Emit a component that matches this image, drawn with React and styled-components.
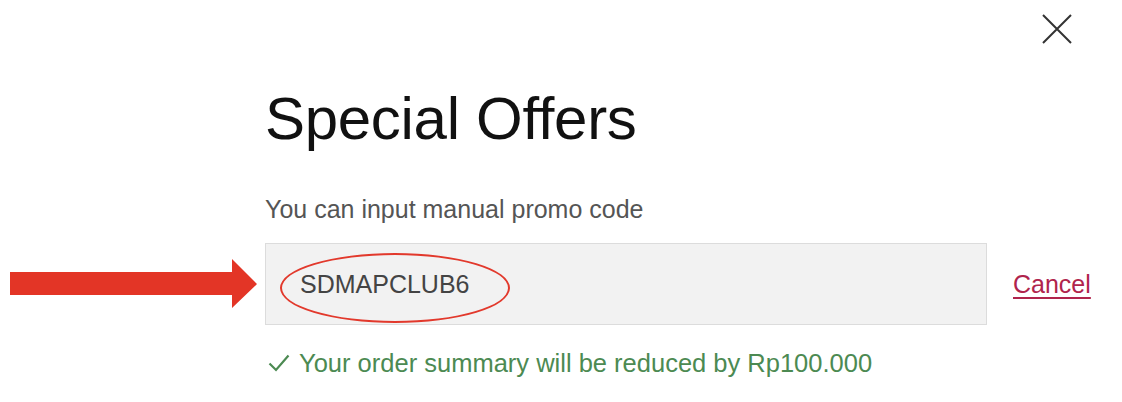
import styled, { createGlobalStyle } from "styled-components";

const GlobalStyle = createGlobalStyle`
  html, body {
    margin: 0;
    padding: 0;
    background: #fff;
  }
  body {
    font-family: "Liberation Sans", Arial, sans-serif;
    color: #222;
  }
`;

const Page = styled.div`
  width: 1122px;
  height: 402px;
  box-sizing: border-box;
  padding-top: 14px;
  display: grid;
  grid-template-columns: 265px 722px 1fr;
  grid-template-rows: 30px auto auto auto auto;
  align-content: start;
`;

const CloseBar = styled.div`
  grid-column: 1 / -1;
  display: flex;
  justify-content: flex-end;
  padding-right: 50px;
`;

const CloseButton = styled.button`
  width: 30px;
  height: 30px;
  padding: 0;
  border: none;
  background: none;
  cursor: pointer;
  display: flex;
`;

const Title = styled.h1`
  grid-column: 2;
  margin: 40px 0 0;
  font-size: 60px;
  line-height: 70px;
  font-weight: 400;
  letter-spacing: -0.3px;
  color: #111;
`;

const Hint = styled.p`
  grid-column: 2;
  margin: 40px 0 0;
  font-size: 25px;
  line-height: 30px;
  color: #555;
`;

const ArrowCell = styled.div`
  grid-column: 1;
  display: flex;
  align-items: center;
  padding-left: 10px;
  margin-top: 19px;
`;

const PromoField = styled.div`
  grid-column: 2;
  position: relative;
  margin-top: 19px;
  height: 82px;
  box-sizing: border-box;
  background: #f2f2f2;
  border: 1px solid #dcdcdc;
  display: flex;
  align-items: center;
  padding-left: 34px;
  font-size: 25px;
  color: #444;
`;

const Circled = styled.span`
  position: absolute;
  left: 14px;
  top: 9px;
  width: 230px;
  height: 70px;
  box-sizing: border-box;
  border: 2px solid #e2392c;
  border-radius: 50%;
  pointer-events: none;
`;

const CancelCell = styled.div`
  grid-column: 3;
  margin-top: 19px;
  display: flex;
  align-items: center;
  padding-left: 26px;
`;

const CancelLink = styled.a`
  font-size: 25px;
  color: #b0244c;
  text-decoration: underline;
  text-decoration-thickness: 2px;
  text-underline-offset: 4px;
  cursor: pointer;
`;

const Success = styled.div`
  grid-column: 2 / -1;
  margin-top: 23px;
  display: flex;
  align-items: center;
  gap: 9px;
  padding-left: 3px;
  font-size: 25.5px;
  line-height: 30px;
  color: #4c8a52;
`;

export default function App() {
  return (
    <>
      <GlobalStyle />
      <Page>
        <CloseBar>
          <CloseButton aria-label="Close">
            <svg width="30" height="30" viewBox="0 0 30 30">
              <path d="M1 1 L29 29 M29 1 L1 29" stroke="#333" strokeWidth="2" fill="none" />
            </svg>
          </CloseButton>
        </CloseBar>
        <Title>Special Offers</Title>
        <Hint>You can input manual promo code</Hint>
        <ArrowCell>
          <svg width="248" height="50" viewBox="0 0 248 50">
            <path d="M0 13 H222 V0 L247 25 L222 49 V36 H0 Z" fill="#e33526" />
          </svg>
        </ArrowCell>
        <PromoField>
          SDMAPCLUB6
          <Circled />
        </PromoField>
        <CancelCell>
          <CancelLink>Cancel</CancelLink>
        </CancelCell>
        <Success>
          <svg width="22" height="18" viewBox="0 0 22 18">
            <path d="M1.5 9.5 L8 16 L20.5 1.5" stroke="#4c8a52" strokeWidth="2.2" fill="none" />
          </svg>
          Your order summary will be reduced by Rp100.000
        </Success>
      </Page>
    </>
  );
}
